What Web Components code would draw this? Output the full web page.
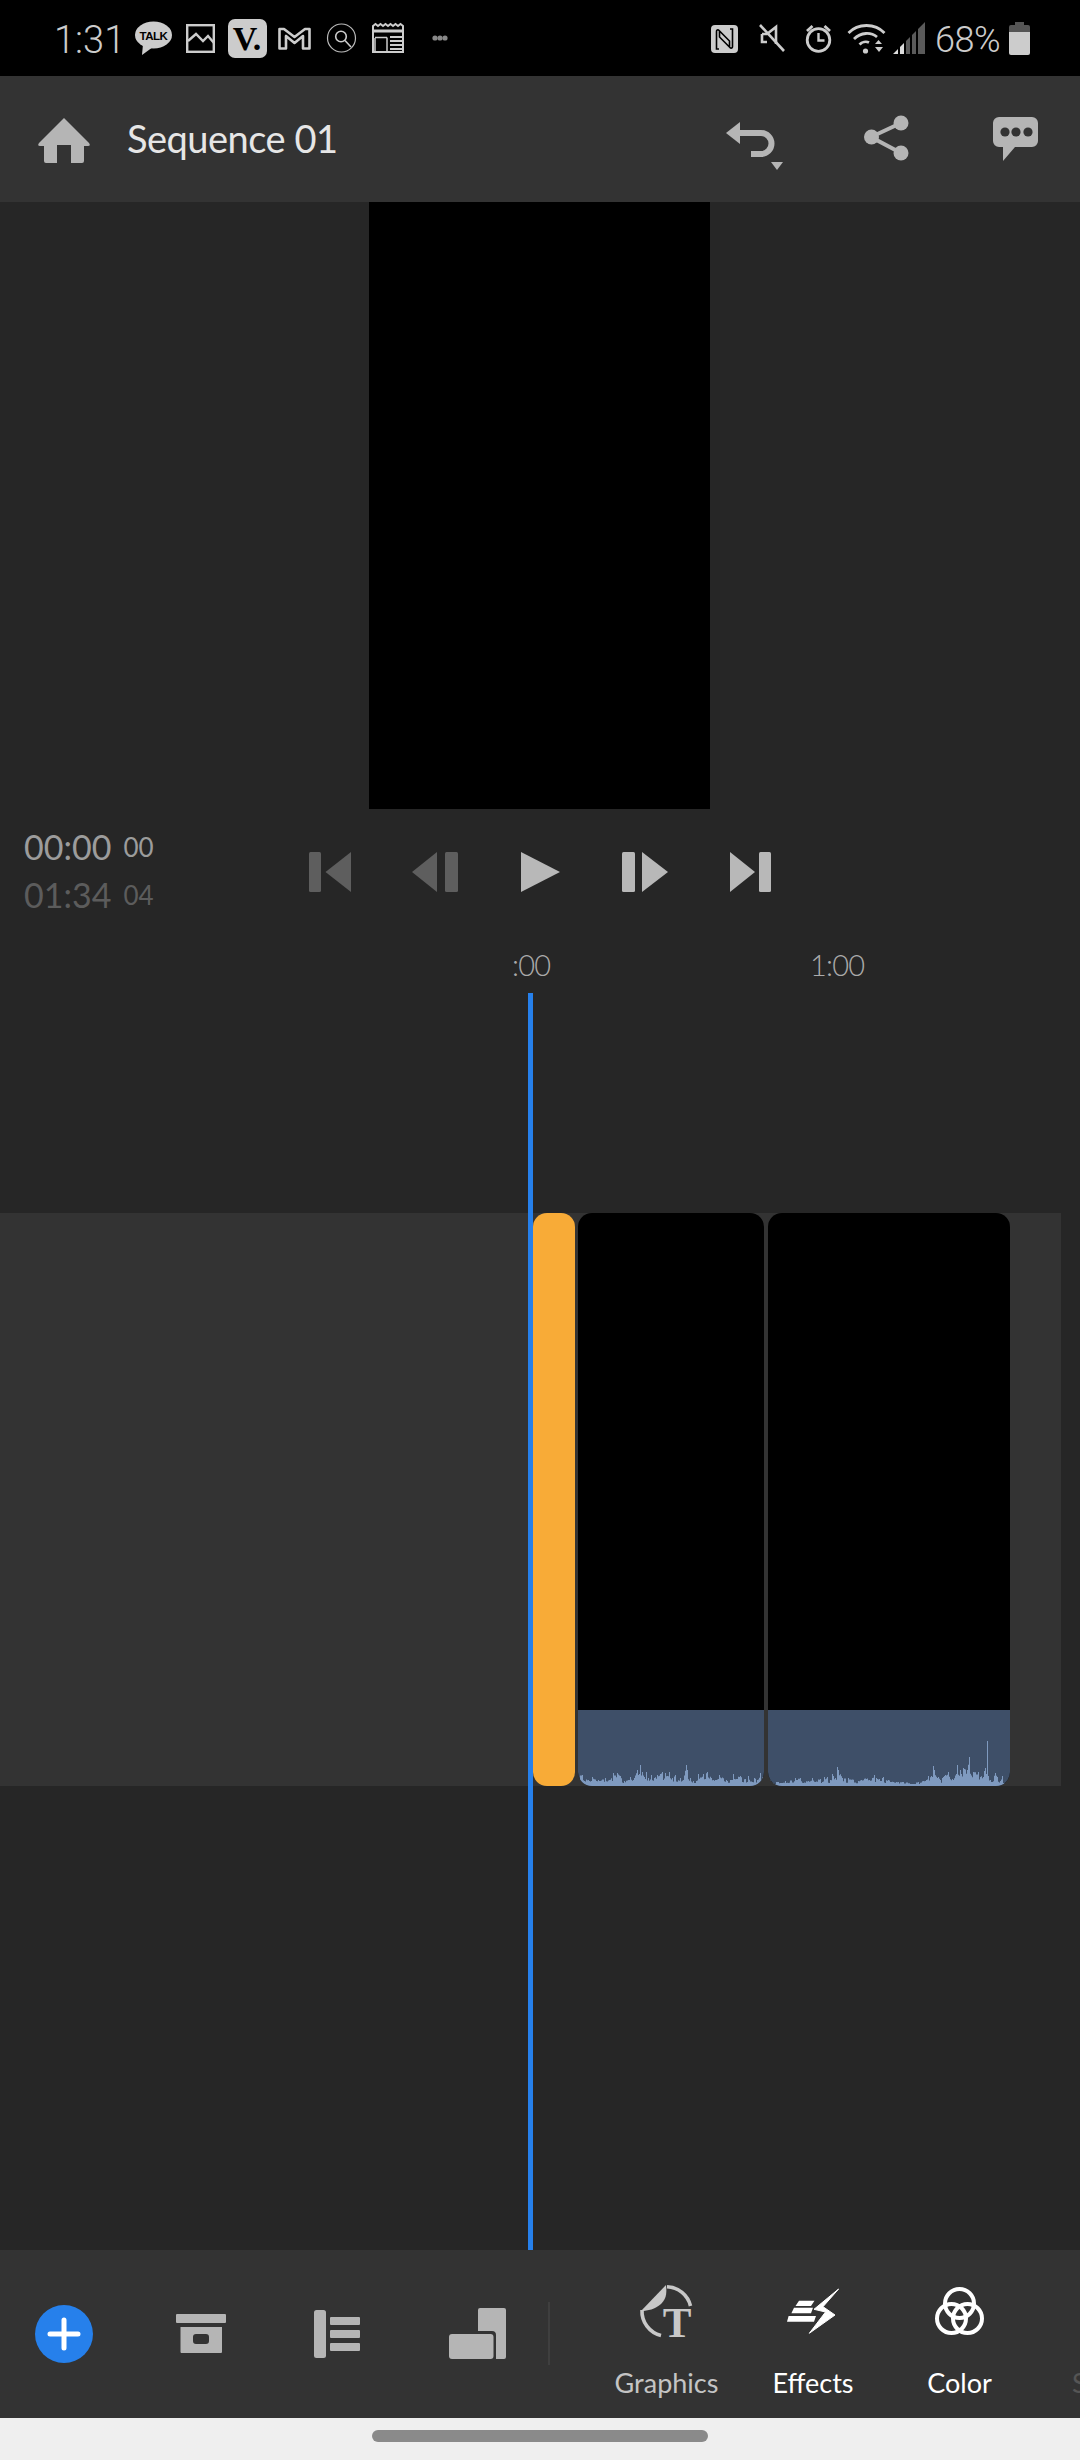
<!DOCTYPE html>
<html><head><meta charset="utf-8">
<style>
html,body{margin:0;padding:0;background:#262626}
body{width:1080px;height:2460px;overflow:hidden;display:flex;flex-direction:column;font-family:Lato,"Open Sans",sans-serif}
</style></head>
<body>
<status-bar></status-bar>
<app-header title-text="Sequence 01"></app-header>
<preview-pane></preview-pane>
<transport-row></transport-row>
<time-ruler></time-ruler>
<time-line></time-line>
<tool-panel></tool-panel>
<nav-pill></nav-pill>
<script>
function def(name, css, html, init){
  customElements.define(name, class extends HTMLElement{
    constructor(){super();const r=this.attachShadow({mode:'open'});
      const t=document.createElement('template');t.innerHTML='<style>'+css+'</style>'+html;
      r.appendChild(t.content.cloneNode(true));if(init)init(r,this);}
  });
}
const ic=(w,h,body,st='')=>`<svg width="${w}" height="${h}" viewBox="0 0 ${w} ${h}" style="flex:none;display:block;overflow:visible;${st}">${body}</svg>`;

def('status-bar',`
:host{display:flex;flex:none;height:76px;background:#000;align-items:center;color:#ccc;font-family:Roboto,sans-serif}
.t{font-size:38px;line-height:72px;margin:4px 0 0 54px;width:70px;flex:none;font-weight:300}
.p{font-size:36px;line-height:72px;width:74px;margin:4px 0 0 10px;flex:none;font-weight:300;letter-spacing:-.5px}
`,`
<span class="t">1:31</span>
${ic(37,34,`<ellipse cx="18.5" cy="14" rx="18.5" ry="13.5" fill="#ccc"/><path d="M8 23 L7 34 L18 26Z" fill="#ccc"/><text x="18.5" y="18.5" text-anchor="middle" font-family="Liberation Sans" font-weight="700" font-size="11.5" letter-spacing="-.5" fill="#000">TALK</text>`,'margin-left:11px')}
${ic(29,29,`<rect x="1.2" y="1.2" width="26.6" height="26.6" fill="none" stroke="#ccc" stroke-width="2.4"/><path d="M2 17 L10 10 L17 17 L22 12 L28 19" fill="none" stroke="#ccc" stroke-width="2.4"/>`,'margin-left:14px')}
${ic(39,39,`<rect width="39" height="39" rx="7" fill="#ccc"/><text x="19" y="31" text-anchor="middle" font-family="Liberation Serif" font-weight="700" font-size="34" fill="#000">V.</text>`,'margin-left:13px')}
${ic(33,24,`<path d="M1.5 22.5 V3 H6 L16.5 11 L27 3 H31.5 V22.5 H25 V10 L16.5 17 L8 10 V22.5Z" fill="none" stroke="#ccc" stroke-width="2.6" stroke-linejoin="round"/>`,'margin-left:11px')}
${ic(29,30,`<circle cx="14.5" cy="15" r="14" fill="none" stroke="#bbb" stroke-width="1.2"/><circle cx="14" cy="13.5" r="5.3" fill="none" stroke="#ccc" stroke-width="1.6"/><path d="M18 17.5 L24 24" stroke="#ccc" stroke-width="1.6"/>`,'margin-left:16px')}
${ic(33,30,`<path d="M1 3 l2.5 -2 l2.5 2 l2.5 -2 l2.5 2 l2.5 -2 l2.5 2 l2.5 -2 l2.5 2 l2.5 -2 l2.5 2 l2.5 -2 l2.5 2 V29 H1Z" fill="none" stroke="#ccc" stroke-width="2"/><path d="M1 8 H32" stroke="#ccc" stroke-width="3"/><path d="M3 14.5 H15 M3 15 V28 M15 14.5 V28" stroke="#ccc" stroke-width="1.5"/><path d="M18 14 H32 M18 18 H32 M18 22 H32 M18 26 H32" stroke="#ccc" stroke-width="2"/>`,'margin-left:16px')}
${ic(16,8,`<circle cx="3" cy="4" r="2.6" fill="#888"/><circle cx="8" cy="4" r="2.6" fill="#888"/><circle cx="13" cy="4" r="2.6" fill="#888"/>`,'margin-left:27px')}
<span style="flex:1"></span>
${ic(27,28,`<rect width="27" height="28" rx="4" fill="#ccc"/><path d="M8 24 H5.5 V6.5 Q5.5 4.5 7.5 5 L18.5 16 V22 M19 4 H21.5 V21.5 Q21.5 23.5 19.5 23 L8.5 12 V6" fill="none" stroke="#000" stroke-width="1.6"/>`,'margin-top:1px')}
${ic(26,28,`<path d="M3 10 H8 L17 3 V20 M8 18 H3 V10" fill="none" stroke="#ccc" stroke-width="2.6"/><path d="M1 1 L25 27" stroke="#ccc" stroke-width="2.6"/>`,'margin-left:21px')}
${ic(27,29,`<circle cx="13.5" cy="16" r="11.3" fill="none" stroke="#ccc" stroke-width="2.8"/><path d="M13.5 9 V16.5 H19.5" fill="none" stroke="#ccc" stroke-width="2.4"/><path d="M2 7 L7.5 2 M25 7 L19.5 2" stroke="#ccc" stroke-width="2.8"/>`,'margin-left:20px')}
${ic(39,32,`<g fill="none" stroke="#ccc" stroke-width="2.8"><path d="M1.5 11 C11 1 28 1 37.5 11"/><path d="M7 17 C14 10 24 10 30 15"/><path d="M12.5 22.5 C15 20 19 19 22 20.5"/></g><circle cx="18.5" cy="29" r="2.6" fill="#ccc"/><path d="M28 22 L31.5 18 L35 22Z M28 25 H36 L32 30Z" fill="#ccc"/>`,'margin-left:15px')}
${ic(32,32,`<path d="M0 32 L5 27 V32Z M7 25 L11 21 V32 H7Z" fill="#ddd"/><path d="M13 19 L17 15 V32 H13Z M19 13 L23 9 V32 H19Z M25 7 L32 0 V32 H25Z" fill="#5a5a5a"/>`,'margin-left:7px')}
<span class="p">68%</span>
${ic(21,33,`<path d="M6 0 H15 V3 H19 a2 2 0 0 1 2 2 V10 H0 V5 a2 2 0 0 1 2 -2 H6Z" fill="#555"/><path d="M0 10 H21 V31 a2 2 0 0 1 -2 2 H2 a2 2 0 0 1 -2 -2Z" fill="#ccc"/>`,'margin-right:50px')}
`);

def('app-header',`
:host{display:flex;flex:none;height:126px;background:#333;align-items:center;padding-left:38px;box-sizing:border-box}
.n{font-size:38px;color:#e6e6e6;margin:0 0 2px 37px;flex:1;line-height:1;letter-spacing:-.5px}
`,`
${ic(52,45,`<path d="M26 0 L51 25 Q53 28 50 28 H46 V43 a2 2 0 0 1 -2 2 H33 V27 H19 V45 H8 a2 2 0 0 1 -2 -2 V28 H2 Q-1 28 1 25Z" fill="#b5b5b5"/>`,'margin-top:2px')}
<span class="n"></span>
${ic(57,48,`<path d="M0 11 L14 0 V22Z" fill="#b5b5b5"/><path d="M12 11 H35 a10.5 10.5 0 0 1 0 21 H25" fill="none" stroke="#b5b5b5" stroke-width="6"/><path d="M45 40 H57 L51 48Z" fill="#b5b5b5"/>`,'margin-top:14px')}
${ic(45,46,`<path d="M37 8 L7 22 L37 38" fill="none" stroke="#b5b5b5" stroke-width="4"/><circle cx="37" cy="8" r="7.5" fill="#b5b5b5"/><circle cx="7.5" cy="22" r="7.5" fill="#b5b5b5"/><circle cx="37" cy="38" r="7.5" fill="#b5b5b5"/>`,'margin:0 0 2px 81px')}
${ic(45,44,`<path d="M6 0 H39 a6 6 0 0 1 6 6 V24 a6 6 0 0 1 -6 6 H22 L10 44 V30 H6 a6 6 0 0 1 -6 -6 V6 a6 6 0 0 1 6 -6Z" fill="#b5b5b5"/><circle cx="12" cy="15" r="4.6" fill="#333"/><circle cx="23" cy="15" r="4.6" fill="#333"/><circle cx="35" cy="15" r="4.6" fill="#333"/>`,'margin-left:84px;margin-right:42px')}
`,(r,h)=>{r.querySelector('.n').textContent=h.getAttribute('title-text')});

def('preview-pane',`
:host{display:flex;flex:none;height:607px;justify-content:center;padding-right:1px}
div{width:341px;background:#000}
`,`<div></div>`);

const D='#5e5e5e',B='#b8b8b8';
def('transport-row',`
:host{display:flex;flex:none;height:127px;align-items:flex-start;box-sizing:border-box;padding:0 0 0 24px}
.c{width:285px;flex:none;font-size:34px;line-height:48px;padding-top:14px;font-weight:400}
.a{color:#9c9c9c}.b{color:#5c5c5c}
.c small{font-size:26px;margin-left:12px;vertical-align:3px}
svg{margin-top:43px}
`,`
<div class="c"><div class="a">00:00<small>00</small></div><div class="b">01:34<small>04</small></div></div>
${ic(42,40,`<rect width="12" height="40" rx="1.5" fill="${D}"/><path d="M42 0 V40 L16.5 20Z" fill="${D}"/>`)}
${ic(46,40,`<path d="M25 0 V40 L0 20Z" fill="${D}"/><rect x="33" width="13" height="40" rx="1.5" fill="${D}"/>`,'margin-left:61px')}
${ic(39,40,`<path d="M0 0 L39 20 L0 40Z" fill="${B}"/>`,'margin-left:63px')}
${ic(46,40,`<rect width="13" height="40" rx="1.5" fill="${B}"/><path d="M20 0 L46 20 L20 40Z" fill="${B}"/>`,'margin-left:62px')}
${ic(41,40,`<path d="M0 0 L25 20 L0 40Z" fill="${B}"/><rect x="29" width="12" height="40" rx="1.5" fill="${B}"/>`,'margin-left:62px')}
`);

def('time-ruler',`
:host{display:block;flex:none;height:57px;color:#aaa;font-size:29px;font-weight:300;line-height:40px;letter-spacing:-.8px}
div{display:flex;padding-left:512px;padding-top:9px}
span:first-child{width:298px;flex:none}
`,`<div><span>:00</span><span>1:00</span></div>`);

function wave(w,h,pts,seed){
  let s=seed;const rnd=()=>{s=(s*16807)%2147483647;return s/2147483647};
  pts=pts.slice().sort((a,b)=>a[0]-b[0]);
  const hs=[];let hold=1;
  for(let x=0;x<w;x++){
    let a=pts[0],b=pts[pts.length-1];
    for(let i=0;i<pts.length-1;i++){if(pts[i][0]<=x&&x<=pts[i+1][0]){a=pts[i];b=pts[i+1];break}}
    const t=b[0]===a[0]?0:Math.min(1,Math.max(0,(x-a[0])/(b[0]-a[0])));
    if(x%2===0)hold=.4+.6*rnd();
    hs.push(Math.max(2,(a[1]+(b[1]-a[1])*t)*hold));
  }
  for(const [x,v] of pts){if(x>=0&&x<w)hs[x]=v}
  let d=`M0 ${h}`;
  hs.forEach((v,x)=>{d+=` L${x} ${(h-v).toFixed(1)} L${x+1} ${(h-v).toFixed(1)}`});
  return d+` L${w} ${h}Z`;
}
def('time-line',`
:host{display:block;flex:none;height:1257px;position:relative;padding-top:220px;box-sizing:border-box}
.track{display:flex;height:573px;width:1061px;background:#333;padding-left:533px;box-sizing:border-box}
.head{position:absolute;left:528px;top:0;bottom:0;width:5px;background:#2680eb}
.o{width:42px;background:#f8ab37;border-radius:14px;flex:none}
.clip{flex:none;background:#000;border-radius:14px;overflow:hidden;display:flex;flex-direction:column;justify-content:flex-end}
.a{height:76px;background:#3e4f68;display:flex;align-items:flex-end}
.a svg{display:block;width:100%}
`,`
<div class="track">
<div class="o"></div>
<div class="clip" style="width:186px;margin-left:3px"><div class="a"><svg class="w1" height="24" viewBox="0 0 186 24"><path fill="#7f9abf"/></svg></div></div>
<div class="clip" style="width:242px;margin-left:4px"><div class="a"><svg class="w2" height="50" viewBox="0 0 242 50"><path fill="#7f9abf"/></svg></div></div>
</div>
<div class="head"></div>
`,(r)=>{
 r.querySelector('.w1 path').setAttribute('d',wave(186,24,[[4,11],[10,6],[14,9],[20,6],[27,8],[31,6],[35,13],[39,13],[42,10],[46,5],[50,6],[52,9],[55,6],[59,16],[62,21],[64,14],[66,9],[68,14],[70,8],[73,11],[76,8],[79,11],[84,14],[87,13],[91,14],[94,8],[97,11],[102,8],[105,6],[108,21],[109,16],[112,8],[115,5],[118,5],[120,12],[125,12],[129,14],[135,6],[141,11],[148,6],[152,6],[155,12],[162,10],[167,7],[170,10],[176,8],[179,6],[182,13]],7));
 r.querySelector('.w2 path').setAttribute('d',wave(242,50,[[2,6],[10,4],[17,5],[27,8],[32,8],[40,5],[44,8],[52,7],[56,9],[59,9],[62,6],[64,12],[67,8],[69,19],[70,16],[74,8],[80,8],[90,5],[106,11],[109,7],[115,9],[120,6],[130,4],[150,4],[160,10],[165,20],[166,16],[172,6],[180,14],[185,6],[189,21],[192,16],[195,18],[199,16],[201,29],[205,14],[210,14],[212,9],[217,18],[218,12],[219,45],[220,10],[222,6],[227,13],[229,9],[232,5],[234,10],[235,3]],11));
});

def('tool-panel',`
:host{display:flex;flex:none;height:168px;background:#333;align-items:flex-start;position:relative;font-size:27px}
.sep{width:2px;height:63px;background:#3f3f3f;margin:52px 0 0 0;flex:none}
.it{flex:none;display:flex;flex-direction:column;align-items:center;height:168px;position:relative;line-height:40px}
.it span{position:absolute;top:113px;white-space:nowrap}
.g{color:#c4c4c4}.w{color:#fff}.f{color:#555;position:absolute;left:1072px;top:113px;line-height:40px}
`,`
${ic(58,58,`<circle cx="29" cy="29" r="29" fill="#2680eb"/><path d="M29 15 V43 M15 29 H43" stroke="#fff" stroke-width="5" stroke-linecap="round"/>`,'margin:55px 0 0 35px')}
${ic(50,39,`<rect width="50" height="9" rx="1" fill="#b5b5b5"/><path fill-rule="evenodd" d="M4.5 13 H46 V38 a1 1 0 0 1 -1 1 H5.5 a1 1 0 0 1 -1 -1Z M20 20 a3 3 0 0 0 -3 3 V27 a3 3 0 0 0 3 3 H30 a3 3 0 0 0 3 -3 V23 a3 3 0 0 0 -3 -3Z" fill="#b5b5b5"/>`,'margin:64px 0 0 83px')}
${ic(46,48,`<rect width="12" height="48" rx="2.5" fill="#b5b5b5"/><rect x="16" y="7" width="30" height="8" rx="1" fill="#b5b5b5"/><rect x="16" y="20" width="30" height="8" rx="1" fill="#b5b5b5"/><rect x="16" y="33" width="30" height="8" rx="1" fill="#b5b5b5"/>`,'margin:60px 0 0 88px')}
${ic(57,51,`<path d="M31 0 H55 a2 2 0 0 1 2 2 V49 a2 2 0 0 1 -2 2 H47 V27 a4 4 0 0 0 -4 -4 H29 V2 a2 2 0 0 1 2 -2Z" fill="#b5b5b5"/><rect y="26" width="44.5" height="25" rx="3" fill="#b5b5b5"/>`,'margin:58px 0 0 89px')}
<div class="sep" style="margin-left:42px"></div>
<div class="it g" style="margin-left:90px;width:53px">${ic(53,53,`<g fill="none" stroke="#c8c8c8" stroke-width="3.6"><path d="M27 1.8 A25 25 0 0 1 50.5 21"/><path d="M2 25 A25 25 0 0 0 21 50.5"/></g><path d="M1 26 L26 0 C27 9 26 14 21 19 C15 24 8 26 1 26Z" fill="#c8c8c8"/><text x="37" y="52" text-anchor="middle" font-family="Liberation Serif" font-weight="700" font-size="43" fill="#c8c8c8">T</text>`,'margin-top:35px')}<span>Graphics</span></div>
<div class="it w" style="margin-left:94px;width:52px">${ic(52,45,`<path d="M51.6 1 L27 21.3 L38.5 24 L22.3 45.3 L48 27 L36 18.7Z" fill="#fff" stroke="#fff" stroke-linejoin="round"/><path d="M12 12.7 H27.5 L24 18 H8.5Z M7 19.7 H26 L24 25.3 H4.4Z M1.6 28 H29 L27 33.7 H0Z" fill="#fff"/>`,'margin-top:38px')}<span>Effects</span></div>
<div class="it w" style="margin-left:96px;width:49px">${ic(49,48,`<g fill="none" stroke="#fff" stroke-width="4"><circle cx="24.5" cy="16.5" r="14.5"/><circle cx="16.5" cy="31.5" r="14.5"/><circle cx="32.5" cy="31.5" r="14.5"/></g>`,'margin-top:37px')}<span>Color</span></div>
<span class="f">S</span>
`);

def('nav-pill',`
:host{display:flex;flex:none;height:42px;background:#efefef;justify-content:center;align-items:center}
div{width:336px;height:12px;border-radius:6px;background:#8a8a8a;margin-top:-6px}
`,`<div></div>`);
</script>
</body></html>
